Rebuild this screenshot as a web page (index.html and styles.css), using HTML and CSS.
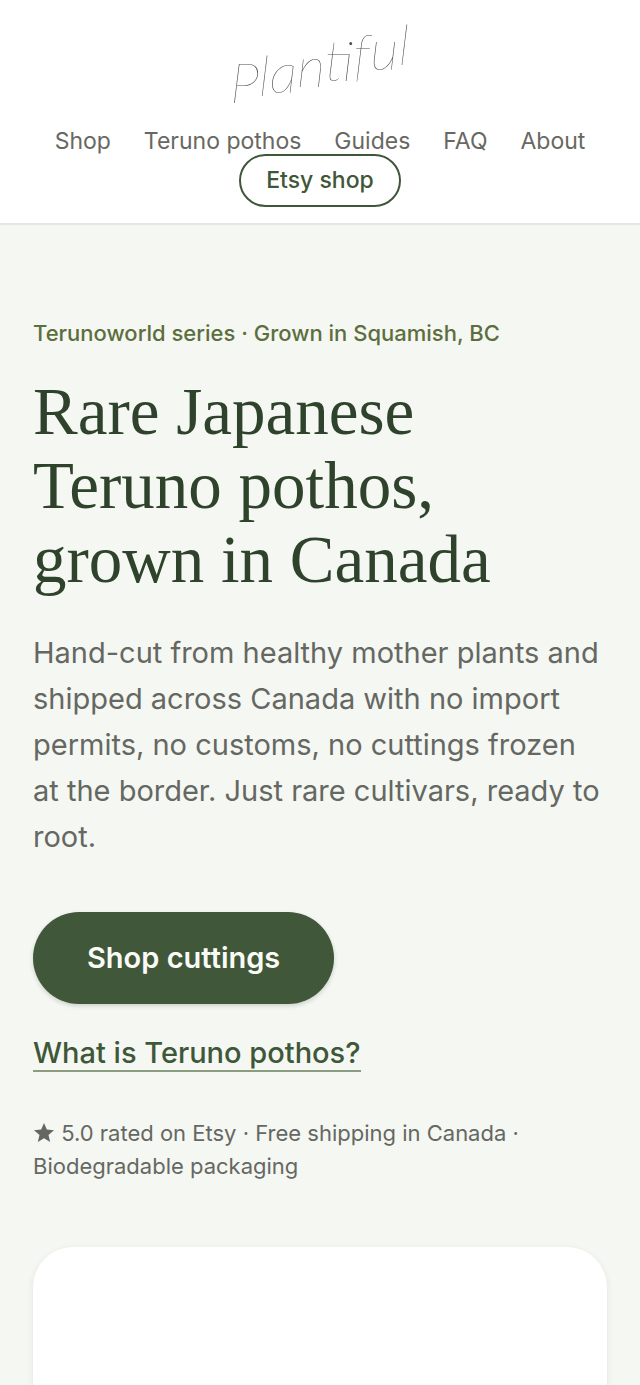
FILE: index.html
```html
<!DOCTYPE html>
<html lang="en">
<head>
<meta charset="utf-8">
<meta name="viewport" content="width=device-width, initial-scale=1">
<title>Plantiful</title>
<link rel="stylesheet" href="styles.css">
</head>
<body>
<header class="site-header">
  <a class="logo" href="#" aria-label="Plantiful home">
    <svg class="logo-mark" viewBox="0 0 188 84" role="img" aria-label="Plantiful">
      <text class="logo-text" x="4" y="79" dy="0 -7 -3 -6 -6 -4 -3 -4 -5">Plantiful</text>
    </svg>
  </a>
  <nav class="nav" aria-label="Main">
    <a class="nav-link" href="#">Shop</a>
    <a class="nav-link" href="#">Teruno pothos</a>
    <a class="nav-link" href="#">Guides</a>
    <a class="nav-link" href="#">FAQ</a>
    <a class="nav-link" href="#">About</a>
    <a class="nav-cta" href="#">Etsy shop</a>
  </nav>
</header>
<main class="hero">
  <p class="eyebrow">Terunoworld series · Grown in Squamish, BC</p>
  <h1 class="title">Rare Japanese Teruno pothos, grown in Canada</h1>
  <p class="lead">Hand-cut from healthy mother plants and shipped across Canada with no import permits, no customs, no cuttings frozen at the border. Just rare cultivars, ready to root.</p>
  <div class="actions">
    <a class="button" href="#">Shop cuttings</a>
    <a class="text-link" href="#">What is Teruno pothos?</a>
  </div>
  <p class="trust"><svg class="star" viewBox="0 0 22 20" aria-hidden="true"><path d="M11 0l2.800 6.600 7.200.600-5.500 4.700L17.200 19 11 15.200 4.800 19l1.700-7.100L1 7.200l7.200-.600z"/></svg> 5.0 rated on Etsy · Free shipping in Canada · Biodegradable packaging</p>
  <div class="card"></div>
</main>
</body>
</html>
```
FILE: styles.css
```css
* {
  box-sizing: border-box;
}

body {
  display: flex;
  flex-direction: column;
  min-height: 100vh;
  margin: 0;
  background: #f5f7f2;
  color: #656862;
  font-family: Inter, "Liberation Sans", sans-serif;
}

p,
h1 {
  margin: 0;
}

a {
  color: inherit;
  text-decoration: none;
}

.site-header {
  display: flex;
  flex-direction: column;
  align-items: center;
  gap: 21px;
  padding: 24px 32px 16px;
  background: #fff;
  border-bottom: 2px solid #e4e6e2;
}

.logo {
  display: block;
}

.logo-mark {
  display: block;
  width: 188px;
  height: 84px;
  overflow: visible;
}

.logo-text {
  fill: #4a4f4a;
  font-family: Lato, "Liberation Sans", sans-serif;
  font-size: 56px;
  font-style: italic;
  font-weight: 200;
}

.nav {
  display: flex;
  flex-wrap: wrap;
  justify-content: center;
  column-gap: 33px;
  font-size: 23px;
  line-height: 25px;
}

.nav-link {
  color: #686862;
}

.nav-cta {
  padding: 12px 25px;
  border: 2px solid #3f5739;
  border-radius: 32px;
  color: #3f5739;
  font-weight: 500;
}

.hero {
  display: flex;
  flex: 1;
  flex-direction: column;
  padding: 91px 33px 0;
}

.eyebrow {
  color: #5d6e3e;
  font-size: 22px;
  font-weight: 500;
  line-height: 34px;
}

.title {
  margin-top: 24px;
  color: #2f432c;
  font-family: "Liberation Serif", serif;
  font-size: 67px;
  font-weight: 400;
  line-height: 74px;
}

.lead {
  margin-top: 34px;
  font-size: 29px;
  line-height: 46px;
}

.actions {
  display: flex;
  flex-direction: column;
  align-items: flex-start;
  gap: 31px;
  margin-top: 52px;
}

.button {
  padding: 28px 54px;
  border-radius: 46px;
  background: #40573a;
  box-shadow: 0 2px 4px rgb(47 67 44 / 20%);
  color: #fafbf7;
  font-size: 29px;
  font-weight: 600;
  line-height: 36px;
}

.text-link {
  border-bottom: 2px solid #8b9c80;
  color: #3f5739;
  font-size: 29px;
  font-weight: 500;
  line-height: 35px;
}

.trust {
  margin-top: 45px;
  font-size: 22px;
  line-height: 33px;
}

.star {
  width: 22px;
  height: 20px;
  vertical-align: -2px;
  fill: currentColor;
}

.card {
  flex: 1;
  min-height: 120px;
  margin-top: 64px;
  border-radius: 40px 40px 0 0;
  background: #fff;
  box-shadow: 0 2px 6px rgb(47 67 44 / 10%);
}
```
